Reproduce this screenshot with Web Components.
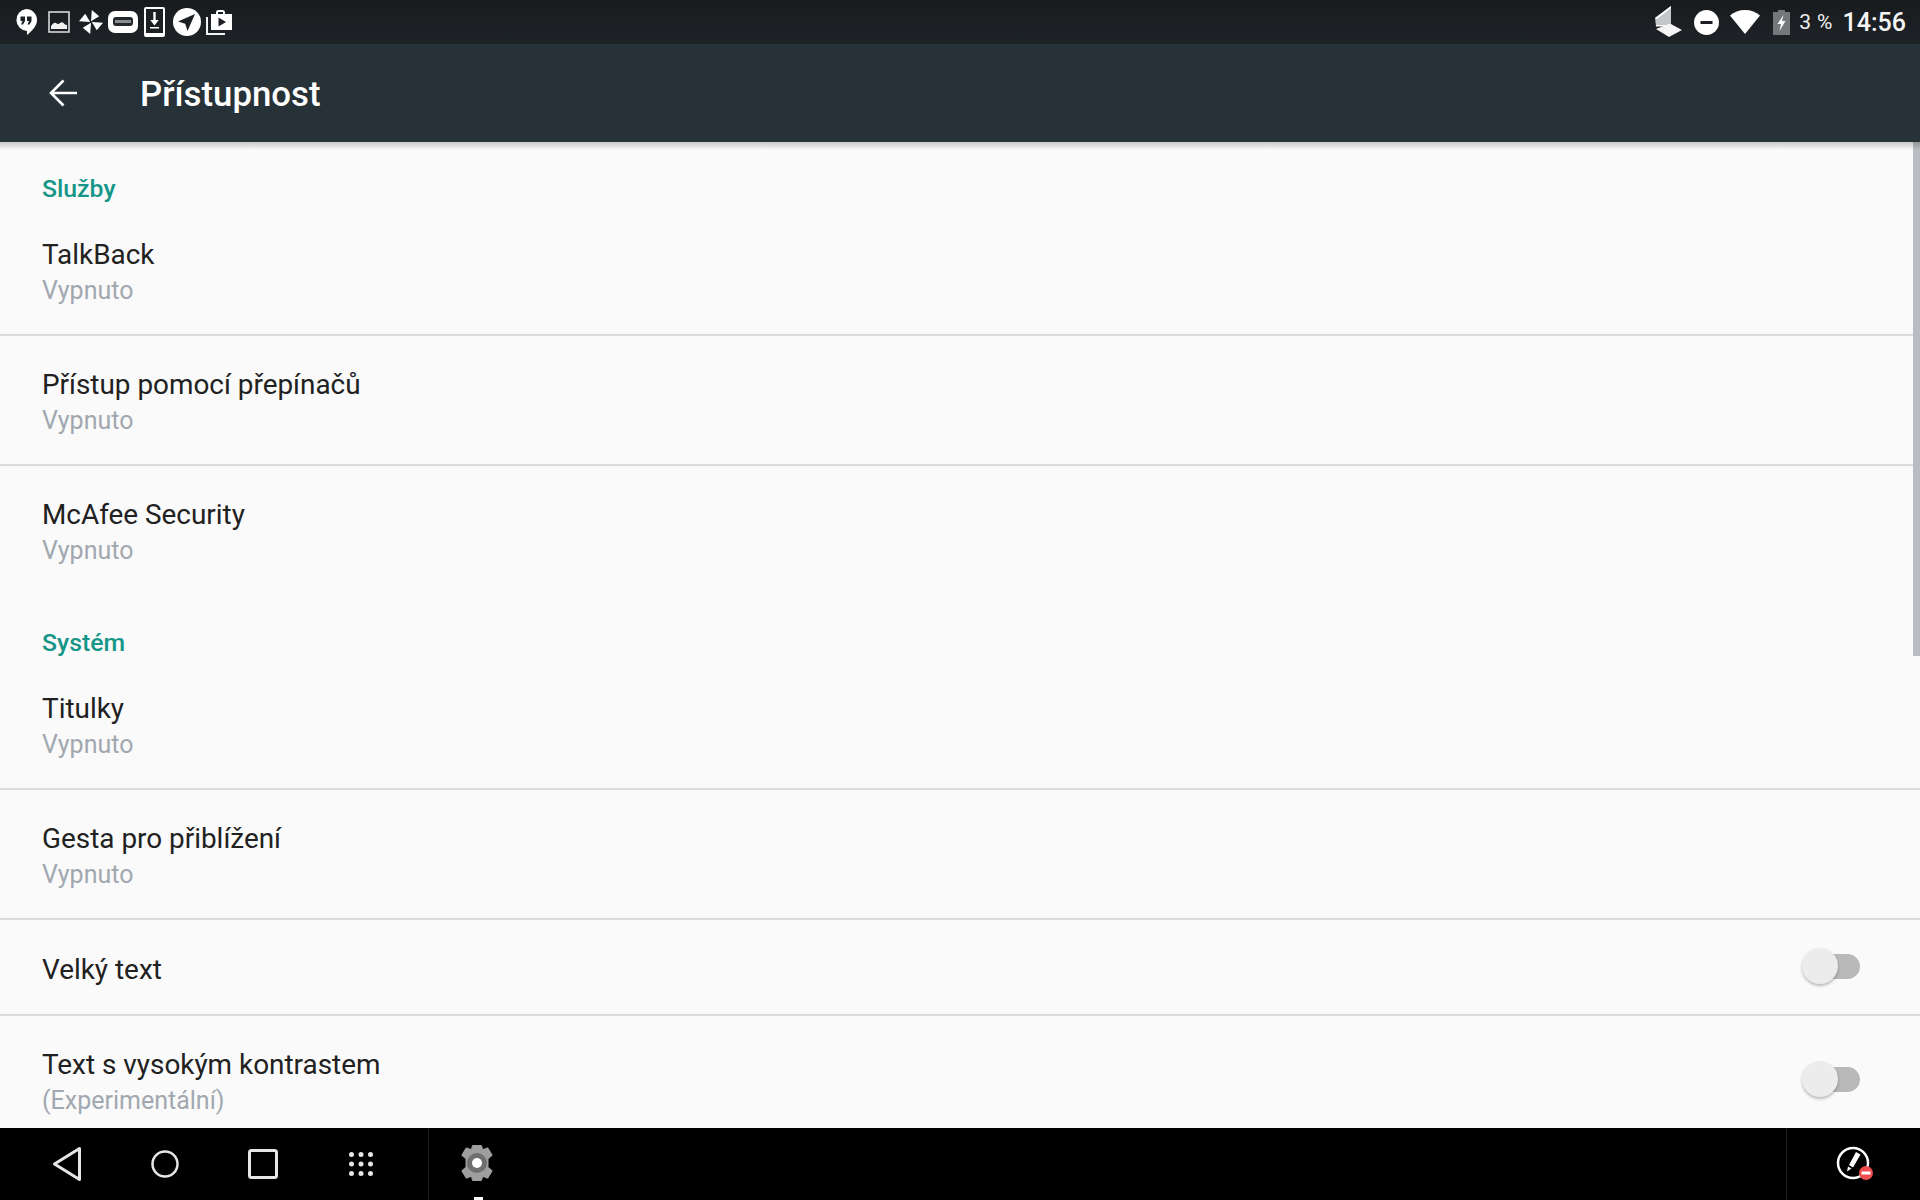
<!DOCTYPE html>
<html lang="cs">
<head>
<meta charset="utf-8">
<title>Přístupnost</title>
<style>
  html, body { margin: 0; height: 100%; background: #000; }
  body { font-family: Roboto, "Liberation Sans", sans-serif; overflow: hidden; }
</style>
</head>
<body>
<settings-screen>
  <status-bar slot="top"></status-bar>
  <app-bar slot="top">Přístupnost</app-bar>

  <pref-category>Služby</pref-category>
  <pref-row title="TalkBack" summary="Vypnuto" divider></pref-row>
  <pref-row title="Přístup pomocí přepínačů" summary="Vypnuto" divider></pref-row>
  <pref-row title="McAfee Security" summary="Vypnuto"></pref-row>

  <pref-category style="height:64px">Systém</pref-category>
  <pref-row title="Titulky" summary="Vypnuto" divider></pref-row>
  <pref-row title="Gesta pro přiblížení" summary="Vypnuto" divider></pref-row>
  <pref-row title="Velký text" switch divider></pref-row>
  <pref-row title="Text s vysokým kontrastem" summary="(Experimentální)" switch></pref-row>

  <nav-bar slot="bottom"></nav-bar>
</settings-screen>

<script>
class SettingsScreen extends HTMLElement {
  constructor() {
    super();
    this.attachShadow({ mode: 'open' });
    this.shadowRoot.innerHTML = `
      <style>
        :host { display: flex; flex-direction: column; height: 1200px; width: 1920px; }
        .list { position: relative; flex: 1; min-height: 0; overflow: hidden; background: #fafafa; }
        .shadow { position: absolute; left: 0; right: 0; top: 0; height: 8px; background: linear-gradient(rgba(0,0,0,.2), rgba(0,0,0,0)); }
        .thumb { position: absolute; right: 0; top: 0; width: 7px; height: 514px; background: #b9bcc0; }
      </style>
      <slot name="top"></slot>
      <div class="list">
        <slot></slot>
        <div class="thumb"></div>
        <div class="shadow"></div>
      </div>
      <slot name="bottom"></slot>
    `;
  }
}

class StatusBar extends HTMLElement {
  constructor() {
    super();
    this.attachShadow({ mode: 'open' });
    this.shadowRoot.innerHTML = `
      <style>
        :host { display: flex; align-items: center; justify-content: space-between; height: 44px; padding: 0 14px 0 15px; box-sizing: border-box; background: linear-gradient(#181b1e, #1e2327); color: #fff; }
        .group { display: flex; align-items: center; }
        svg { display: block; flex: none; }
        .pct { font-size: 21px; margin: 0 10px 0 9px; color: #f0f0f0; letter-spacing: .3px; }
        .time { font-size: 25px; color: #f5f5f5; font-weight: 500; }
      </style>
      <div class="group">
        <svg width="22" height="27" viewBox="0 0 22 27" style="margin-right:11px"><path fill="#fff" d="M11 0a11 11 0 0 1 11 11c0 6-5 11-10 15v-4.100A11 11 0 0 1 11 0z"/><path fill="#1c2024" d="M5.500 7.500h4.500v4.500l-2 3.500H6l1.500-3.500h-2zM12 7.500h4.500v4.500l-2 3.500h-2l1.500-3.500h-2z"/></svg>
        <svg width="22" height="22" viewBox="0 0 22 22" style="margin-right:8px"><rect x="1" y="1" width="20" height="20" fill="none" stroke="#d8d8d8" stroke-width="1.600"/><path fill="#f2f2f2" d="M3 18v-3c2-3 4-4 5-3 1.500 1.200 2.500 1.500 4 0 1.500-1.300 3-1 4 .5 1 1 2 1.500 3 1.500v4z"/></svg>
        <svg width="26" height="26" viewBox="0 0 26 26" style="margin-right:4px" fill="#fff"><path d="M13 12.200 13.800 1l7.400 6.200z"/><path d="M13.800 13 25 13.800l-6.200 7.400z"/><path d="M13 13.800 12.200 25l-7.400-6.200z"/><path d="M12.200 13 1 12.200l6.200-7.400z"/></svg>
        <svg width="30" height="22" viewBox="0 0 30 22" style="margin-right:6px"><path fill="#fff" d="M7 0h16a7 7 0 0 1 7 7v8a7 7 0 0 1-7 7H7a7 7 0 0 1-7-7V7a7 7 0 0 1 7-7z"/><rect x="5" y="6" width="20" height="9" rx="3" fill="#23282c"/><path fill="#8a8d90" d="M7 9h16v3H7z"/></svg>
        <svg width="21" height="30" viewBox="0 0 21 30" style="margin-right:8px"><rect width="21" height="30" rx="2" fill="#fff"/><rect x="2" y="2" width="17" height="24" fill="#1c2024"/><path fill="#fff" d="M9.300 5h2.400v8h3l-4.200 5.500L6.300 13h3z"/><path fill="#fff" d="M6 20h9v1.500H6z"/></svg>
        <svg width="28" height="28" viewBox="0 0 28 28" style="margin-right:5px"><circle cx="14" cy="14" r="14" fill="#fff"/><path fill="#1c2024" d="M5 13.500 22 6l-7.500 17-2.300-7.200z"/></svg>
        <svg width="26" height="25" viewBox="0 0 26 25"><path fill="none" stroke="#f2f2f2" stroke-width="2" d="M1 7v17h18"/><path fill="#fff" d="M5 4h5V2.500A2.500 2.500 0 0 1 12.500 0h4A2.500 2.500 0 0 1 19 2.500V4h7v16H5zM12 2v2h5V2z"/><path fill="#1c2024" d="M12.500 7.500 20 12l-7.500 4.500z"/></svg>
      </div>
      <div class="group">
        <svg width="28" height="32" viewBox="0 0 28 32" style="margin-right:12px"><path fill="#c4c6c7" d="M1 12 17 0v20H2z"/><path fill="#fff" d="M1 12 17 0v2L3 13zM2 19h15v1.500H2z"/><path fill="#f5f5f5" d="M2 23l14-5.500L28 24l-13 7z"/></svg>
        <svg width="25" height="25" viewBox="0 0 25 25" style="margin-right:11px"><circle cx="12.500" cy="12.500" r="12.500" fill="#fff"/><rect x="6.500" y="11" width="12" height="3" fill="#1c2024"/></svg>
        <svg width="30" height="24" viewBox="0 0 30 24" style="margin-right:13px"><path fill="#fff" d="M15 24 0 5.500C4 2 9 0 15 0s11 2 15 5.500z"/></svg>
        <svg width="17" height="25" viewBox="0 0 17 25"><path fill="#74787b" d="M5 0h7v2h5v23H0V2h5z"/><path fill="#fff" d="M10.500 5 4.500 14h3.500l-1.500 7 6-10H9z"/></svg>
        <span class="pct">3 %</span>
        <span class="time">14:56</span>
      </div>
    `;
  }
}

class AppBar extends HTMLElement {
  constructor() {
    super();
    this.attachShadow({ mode: 'open' });
    this.shadowRoot.innerHTML = `
      <style>
        :host { display: flex; align-items: center; gap: 63px; height: 98px; padding-left: 49px; box-sizing: border-box; background: #263238; color: #fff; font-size: 34.800px; font-weight: 500; }
        svg { display: block; flex: none; }
        span { padding-top: 2px; }
      </style>
      <svg width="28" height="28" viewBox="0 0 28 28"><path fill="none" stroke="#fff" stroke-width="2.600" d="M28 14H3M14.500 1.500 2 14l12.500 12.500"/></svg>
      <span><slot></slot></span>
    `;
  }
}

class PrefCategory extends HTMLElement {
  constructor() {
    super();
    this.attachShadow({ mode: 'open' });
    this.shadowRoot.innerHTML = `
      <style>
        :host { display: flex; align-items: center; height: 63.500px; padding: 30px 0 0 42px; box-sizing: border-box; color: #159688; font-size: 24.800px; font-weight: 500; }
      </style>
      <slot></slot>
    `;
  }
}

class PrefRow extends HTMLElement {
  constructor() {
    super();
    this.attachShadow({ mode: 'open' });
  }

  connectedCallback() {
    const title = this.getAttribute('title') || '';
    const summary = this.getAttribute('summary');
    const hasSwitch = this.hasAttribute('switch');
    const divider = this.hasAttribute('divider');
    this.removeAttribute('title');
    this.shadowRoot.innerHTML = `
      <style>
        :host { display: flex; align-items: center; justify-content: space-between; height: ${summary ? 130 : 96}px; padding: 6px 60px 0 42px; box-sizing: border-box; border-bottom: 2px solid ${divider ? '#dcdcdc' : 'transparent'}; }
        .title { font-size: 27.900px; line-height: 36px; color: #212121; }
        .summary { font-size: 25px; line-height: 36px; color: #a2a8b0; }
        .track { position: relative; width: 40px; height: 25px; border-radius: 0 13px 13px 0; background: #b9b9b9; margin-top: -6px; }
        .knob { position: absolute; left: -18px; top: -6px; width: 36px; height: 36px; border-radius: 50%; background: #ececec; box-shadow: 0 2px 3px rgba(0,0,0,.25); }
      </style>
      <div>
        <div class="title">${title}</div>
        ${summary ? `<div class="summary">${summary}</div>` : ''}
      </div>
      ${hasSwitch ? '<div class="track"><div class="knob"></div></div>' : ''}
    `;
  }
}

class NavBar extends HTMLElement {
  constructor() {
    super();
    this.attachShadow({ mode: 'open' });
    this.shadowRoot.innerHTML = `
      <style>
        :host { display: flex; align-items: stretch; height: 72px; background: #000; }
        .keys { display: flex; align-items: center; padding: 0 18px; border-right: 1px solid #1d1d1d; }
        .key { display: flex; justify-content: center; align-items: center; width: 98px; height: 72px; box-sizing: border-box; }
        .task { position: relative; flex: 1; display: flex; align-items: center; padding: 0 0 2px 30px; box-sizing: border-box; }
        .running { position: absolute; left: 45px; bottom: 0; width: 9px; height: 3px; background: #fff; }
        .tray { display: flex; align-items: center; width: 134px; padding: 0 0 0 49px; box-sizing: border-box; border-left: 1px solid #1d1d1d; }
        svg { display: block; flex: none; }
      </style>
      <div class="keys">
        <div class="key"><svg width="30" height="36" viewBox="0 0 30 36"><path fill="none" stroke="#e6e6e6" stroke-width="3" stroke-linejoin="round" d="M27.500 2.500v31L2.500 18z"/></svg></div>
        <div class="key"><svg width="28" height="28" viewBox="0 0 28 28"><circle cx="14" cy="14" r="12.500" fill="none" stroke="#e6e6e6" stroke-width="2.500"/></svg></div>
        <div class="key"><svg width="30" height="30" viewBox="0 0 30 30"><rect x="1.500" y="1.500" width="27" height="27" rx="2" fill="none" stroke="#e6e6e6" stroke-width="3"/></svg></div>
        <div class="key"><svg width="24" height="24" viewBox="0 0 24 24" fill="#e6e6e6"><circle cx="2.500" cy="2.500" r="2.500"/><circle cx="12" cy="2.500" r="2.500"/><circle cx="21.500" cy="2.500" r="2.500"/><circle cx="2.500" cy="12" r="2.500"/><circle cx="12" cy="12" r="2.500"/><circle cx="21.500" cy="12" r="2.500"/><circle cx="2.500" cy="21.500" r="2.500"/><circle cx="12" cy="21.500" r="2.500"/><circle cx="21.500" cy="21.500" r="2.500"/></svg></div>
      </div>
      <div class="task">
        <svg width="36" height="36" viewBox="0 0 36 36"><path fill="#9e9e9e" stroke="#9e9e9e" stroke-width="2" stroke-linejoin="round" d="M14 1h8l1.500 4.500 5-2 4 6.500-4 3.500v9l4 3.500-4 6.500-5-2L22 35h-8l-1.500-4.500-5 2-4-6.500 4-3.500v-9l-4-3.500 4-6.500 5 2z"/><circle cx="18" cy="18" r="10" fill="#6f6f6f"/><circle cx="18" cy="18" r="5" fill="#fff"/></svg>
        <div class="running"></div>
      </div>
      <div class="tray">
        <svg width="38" height="36" viewBox="0 0 38 36"><circle cx="17" cy="17" r="15" fill="none" stroke="#fff" stroke-width="2.500"/><path fill="#fff" d="M20 6l4.500 2.500-7.500 13-4-2.500zM12 20.500l3.500 2-4.500 3z"/><circle cx="30" cy="27" r="7" fill="#ef4d4f"/><rect x="25.500" y="25.500" width="9" height="3" fill="#fff"/></svg>
      </div>
    `;
  }
}

customElements.define('settings-screen', SettingsScreen);
customElements.define('status-bar', StatusBar);
customElements.define('app-bar', AppBar);
customElements.define('pref-category', PrefCategory);
customElements.define('pref-row', PrefRow);
customElements.define('nav-bar', NavBar);
</script>
</body>
</html>
